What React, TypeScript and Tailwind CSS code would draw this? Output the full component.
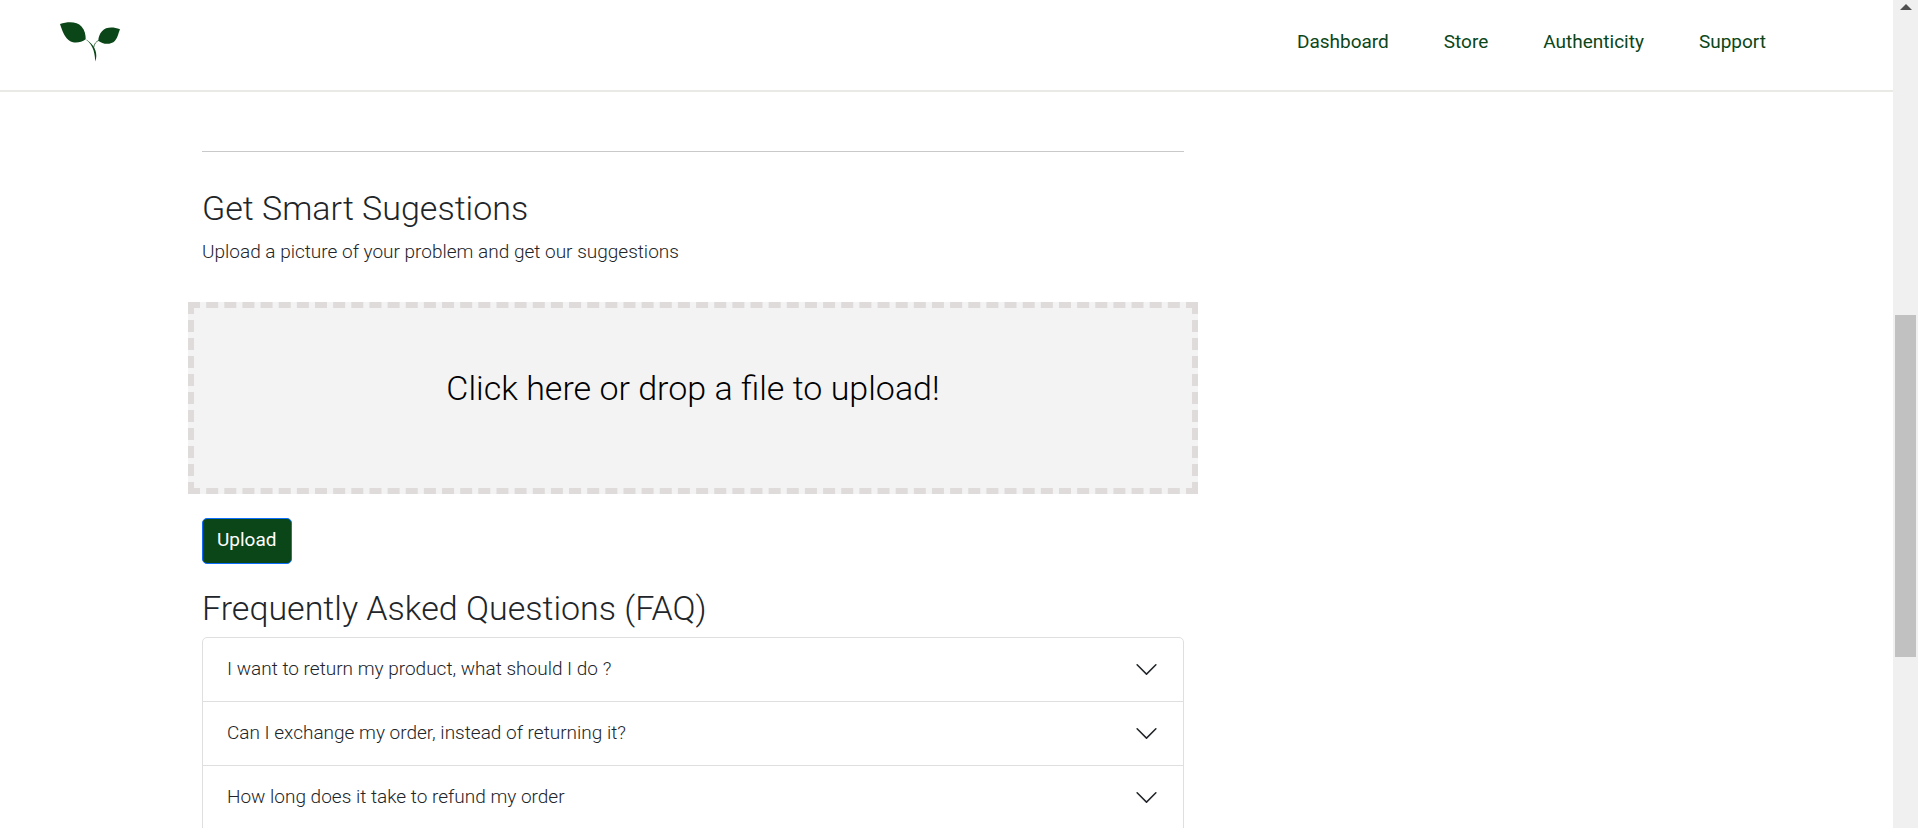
import { useState } from "react";

const links = ["Dashboard", "Store", "Authenticity", "Support"];

const faqs = [
  {
    question: "I want to return my product, what should I do ?",
    answer: "Open your order and choose the return option.",
  },
  {
    question: "Can I exchange my order, instead of returning it?",
    answer: "Yes, unopened products can be exchanged.",
  },
  {
    question: "How long does it take to refund my order",
    answer: "Refunds are completed within a few days.",
  },
];

function Logo() {
  return (
    <svg viewBox="0 0 60 42" className="h-[42px] w-[60px]" fill="#0b4619" aria-hidden="true">
      <path d="M0 2C8-.6 17-.6 21.500 4.500C25 8.500 25.700 13 25.700 17.300C20 21.500 13 21.700 8.500 18C4 14.300 2.300 8.500 0 2Z" />
      <path d="M60 7.300C53 4.800 46 4.800 42 9.300C39.500 12 38.500 15.200 38.300 18.700C43 22.800 51 23 55 18.700C58 15.500 58.200 11.500 60 7.300Z" />
      <path d="M25.500 17.200C31.500 20.500 36.500 26.500 36.300 34C36.200 36 35.900 38 35.400 39.500C34.600 32.500 34.500 24 25.500 17.200Z" />
      <path d="M39 18.300C36 19.500 34.200 21.800 33.700 25.500" fill="none" stroke="#0b4619" strokeWidth="0.7" />
    </svg>
  );
}

function Chevron({ open }: { open: boolean }) {
  return (
    <svg
      viewBox="0 0 16 16"
      className={open ? "size-[25px] shrink-0 rotate-180" : "size-[25px] shrink-0"}
      fill="#212529"
      aria-hidden="true"
    >
      <path
        fillRule="evenodd"
        d="M1.646 4.646a.5.5 0 0 1 .708 0L8 10.293l5.646-5.647a.5.5 0 0 1 .708.708l-6 6a.5.5 0 0 1-.708 0l-6-6a.5.5 0 0 1 0-.708z"
      />
    </svg>
  );
}

function ScrollRail() {
  return (
    <div className="flex w-[25px] shrink-0 flex-col items-center bg-[#f0f0f0]" aria-hidden="true">
      <div className="h-[38%] pt-1">
        <svg viewBox="0 0 12 6" className="h-1.5 w-3" fill="#505050">
          <path d="M6 0L12 6H0Z" />
        </svg>
      </div>
      <div className="h-[41.3%] w-[21px] bg-[#c1c1c1]" />
    </div>
  );
}

export default function App() {
  const [openIndex, setOpenIndex] = useState(-1);

  return (
    <div className="flex h-screen overflow-hidden bg-white font-['Roboto',sans-serif] text-[19px] font-light text-[#212529]">
      <div className="min-w-0 flex-1 overflow-hidden">
        <header className="flex h-[92px] items-start justify-between border-b-2 border-[#e9e9e6] pr-[127px] pl-[60px]">
          <a href="#home" aria-label="Home" className="pt-[22px]">
            <Logo />
          </a>
          <nav className="flex gap-[55px] pt-[27px] leading-[30px] font-normal text-[#0b4619]">
            {links.map((link) => (
              <a key={link} href={`#${link.toLowerCase()}`}>
                {link}
              </a>
            ))}
          </nav>
        </header>

        <div className="pr-[188px] pl-[187px]">
          <main className="w-2/3 px-[15px] pt-[59px]">
            <hr className="border-[#c8c9ca]" />

            <section className="pt-[35px]">
              <h3 className="text-[34px] leading-[42px]">Get Smart Sugestions</h3>
              <p className="pt-2 leading-[30px]">
                Upload a picture of your problem and get our suggestions
              </p>
              <label className="-mx-3.5 mt-[35px] flex h-[192px] cursor-pointer justify-center border-6 border-dashed border-[#dfdbdb] bg-[#f3f3f3] pt-[59px] text-[34px] leading-[42px] text-black">
                <input type="file" className="sr-only" />
                Click here or drop a file to upload!
              </label>
              <button
                type="button"
                className="mt-6 block h-[46px] rounded-[5px] border border-[#0d6efd] bg-[#0b4619] px-3.5 pb-0.5 font-normal text-white"
              >
                Upload
              </button>
            </section>

            <section className="pt-[23px]">
              <h3 className="text-[34px] leading-[42px]">Frequently Asked Questions (FAQ)</h3>
              <div className="mt-2 divide-y divide-[#dfdfdf] rounded-t-[5px] border border-[#dfdfdf]">
                {faqs.map((faq, index) => (
                  <div key={faq.question}>
                    <button
                      type="button"
                      aria-expanded={openIndex === index}
                      onClick={() => setOpenIndex(openIndex === index ? -1 : index)}
                      className="flex h-[63px] w-full items-center justify-between px-6 text-left"
                    >
                      {faq.question}
                      <Chevron open={openIndex === index} />
                    </button>
                    {openIndex === index && <p className="px-6 pb-5">{faq.answer}</p>}
                  </div>
                ))}
              </div>
            </section>
          </main>
        </div>
      </div>
      <ScrollRail />
    </div>
  );
}
